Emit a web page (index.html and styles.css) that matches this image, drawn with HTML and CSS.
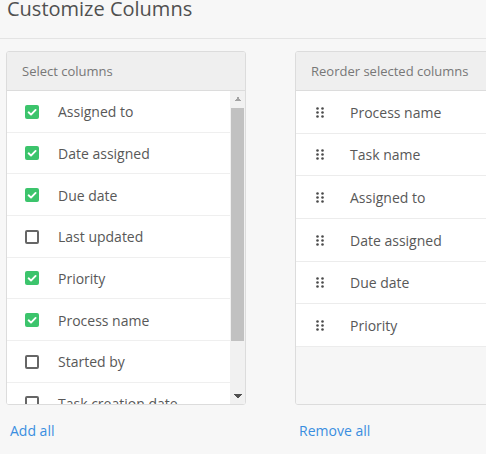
FILE: index.html
```html
<!DOCTYPE html>
<html>
<head>
<meta charset="utf-8">
<link rel="stylesheet" href="styles.css">
</head>
<body>
<div class="page">
  <div class="title-bar"><h1 class="title">Customize Columns</h1></div>
  <div class="columns">
    <div class="col">
      <div class="panel">
        <div class="panel-head">Select columns</div>
        <div class="list list-select">
          <div class="items">
            <div class="row"><span class="cb on"><svg viewBox="0 0 14 14" width="14" height="14"><path d="M3.6 7.3 L6 9.6 L10.6 4.9" fill="none" stroke="#fff" stroke-width="1.9" stroke-linecap="round" stroke-linejoin="round"/></svg></span><span class="label">Assigned to</span></div>
            <div class="row"><span class="cb on"><svg viewBox="0 0 14 14" width="14" height="14"><path d="M3.6 7.3 L6 9.6 L10.6 4.9" fill="none" stroke="#fff" stroke-width="1.9" stroke-linecap="round" stroke-linejoin="round"/></svg></span><span class="label">Date assigned</span></div>
            <div class="row"><span class="cb on"><svg viewBox="0 0 14 14" width="14" height="14"><path d="M3.6 7.3 L6 9.6 L10.6 4.9" fill="none" stroke="#fff" stroke-width="1.9" stroke-linecap="round" stroke-linejoin="round"/></svg></span><span class="label">Due date</span></div>
            <div class="row"><span class="cb off"></span><span class="label">Last updated</span></div>
            <div class="row"><span class="cb on"><svg viewBox="0 0 14 14" width="14" height="14"><path d="M3.6 7.3 L6 9.6 L10.6 4.9" fill="none" stroke="#fff" stroke-width="1.9" stroke-linecap="round" stroke-linejoin="round"/></svg></span><span class="label">Priority</span></div>
            <div class="row"><span class="cb on"><svg viewBox="0 0 14 14" width="14" height="14"><path d="M3.6 7.3 L6 9.6 L10.6 4.9" fill="none" stroke="#fff" stroke-width="1.9" stroke-linecap="round" stroke-linejoin="round"/></svg></span><span class="label">Process name</span></div>
            <div class="row"><span class="cb off"></span><span class="label">Started by</span></div>
            <div class="row"><span class="cb off"></span><span class="label">Task creation date</span></div>
            <div class="row"><span class="cb on"><svg viewBox="0 0 14 14" width="14" height="14"><path d="M3.6 7.3 L6 9.6 L10.6 4.9" fill="none" stroke="#fff" stroke-width="1.9" stroke-linecap="round" stroke-linejoin="round"/></svg></span><span class="label">Task name</span></div>
          </div>
          <div class="scrollbar">
            <div class="sb-btn sb-up"></div>
            <div class="sb-track"><div class="sb-thumb"></div></div>
            <div class="sb-btn sb-down"></div>
          </div>
        </div>
      </div>
      <a class="link" href="#">Add all</a>
    </div>
    <div class="col">
      <div class="panel">
        <div class="panel-head">Reorder selected columns</div>
        <div class="list list-order">
          <div class="row2"><svg class="grip" viewBox="0 0 8 11" width="8" height="11"><circle cx="1.5" cy="1.5" r="1.3"/><circle cx="6.5" cy="1.5" r="1.3"/><circle cx="1.5" cy="5.5" r="1.3"/><circle cx="6.5" cy="5.5" r="1.3"/><circle cx="1.5" cy="9.5" r="1.3"/><circle cx="6.5" cy="9.5" r="1.3"/></svg><span class="label">Process name</span></div>
          <div class="row2"><svg class="grip" viewBox="0 0 8 11" width="8" height="11"><circle cx="1.5" cy="1.5" r="1.3"/><circle cx="6.5" cy="1.5" r="1.3"/><circle cx="1.5" cy="5.5" r="1.3"/><circle cx="6.5" cy="5.5" r="1.3"/><circle cx="1.5" cy="9.5" r="1.3"/><circle cx="6.5" cy="9.5" r="1.3"/></svg><span class="label">Task name</span></div>
          <div class="row2"><svg class="grip" viewBox="0 0 8 11" width="8" height="11"><circle cx="1.5" cy="1.5" r="1.3"/><circle cx="6.5" cy="1.5" r="1.3"/><circle cx="1.5" cy="5.5" r="1.3"/><circle cx="6.5" cy="5.5" r="1.3"/><circle cx="1.5" cy="9.5" r="1.3"/><circle cx="6.5" cy="9.5" r="1.3"/></svg><span class="label">Assigned to</span></div>
          <div class="row2"><svg class="grip" viewBox="0 0 8 11" width="8" height="11"><circle cx="1.5" cy="1.5" r="1.3"/><circle cx="6.5" cy="1.5" r="1.3"/><circle cx="1.5" cy="5.5" r="1.3"/><circle cx="6.5" cy="5.5" r="1.3"/><circle cx="1.5" cy="9.5" r="1.3"/><circle cx="6.5" cy="9.5" r="1.3"/></svg><span class="label">Date assigned</span></div>
          <div class="row2"><svg class="grip" viewBox="0 0 8 11" width="8" height="11"><circle cx="1.5" cy="1.5" r="1.3"/><circle cx="6.5" cy="1.5" r="1.3"/><circle cx="1.5" cy="5.5" r="1.3"/><circle cx="6.5" cy="5.5" r="1.3"/><circle cx="1.5" cy="9.5" r="1.3"/><circle cx="6.5" cy="9.5" r="1.3"/></svg><span class="label">Due date</span></div>
          <div class="row2"><svg class="grip" viewBox="0 0 8 11" width="8" height="11"><circle cx="1.5" cy="1.5" r="1.3"/><circle cx="6.5" cy="1.5" r="1.3"/><circle cx="1.5" cy="5.5" r="1.3"/><circle cx="6.5" cy="5.5" r="1.3"/><circle cx="1.5" cy="9.5" r="1.3"/><circle cx="6.5" cy="9.5" r="1.3"/></svg><span class="label">Priority</span></div>
        </div>
      </div>
      <a class="link" href="#">Remove all</a>
    </div>
  </div>
</div>
</body>
</html>
```

FILE: styles.css
```css
html, body {
  margin: 0;
  padding: 0;
  background: #f7f7f7;
  overflow: hidden;
}
body {
  font-family: "Open Sans", "Noto Sans", sans-serif;
  color: #555;
  width: 486px;
  height: 454px;
}
.page {
  width: 486px;
}
.title-bar {
  border-bottom: 1px solid #e4e4e4;
  padding-left: 7px;
  box-sizing: border-box;
  height: 39px;
}
.title {
  margin: 0;
  font-size: 20px;
  line-height: 18px;
  font-weight: 400;
  color: #505050;
  white-space: nowrap;
}
.columns {
  display: flex;
  gap: 49px;
  padding: 12px 0 0 6px;
}
.col {
  flex: 0 0 240px;
  width: 240px;
  display: flex;
  flex-direction: column;
}
.panel {
  border: 1px solid #dcdcdc;
  border-radius: 3px;
  background: #fff;
  overflow: hidden;
}
.panel-head {
  height: 38px;
  line-height: 38px;
  background: #efefef;
  border-bottom: 1px solid #dcdcdc;
  padding-left: 15px;
  font-size: 13px;
  color: #777;
  white-space: nowrap;
}
.list {
  height: 313px;
}
.list-select {
  display: flex;
  background: #fff;
}
.items {
  flex: 1;
  min-width: 0;
  overflow: hidden;
}
.scrollbar {
  flex: 0 0 15px;
  width: 15px;
  display: flex;
  flex-direction: column;
  background: #f1f1f1;
}
.sb-btn {
  flex: 0 0 16px;
  background-repeat: no-repeat;
  background-position: center;
  background-size: 8px 4px;
}
.sb-up {
  background-image: conic-gradient(from 135deg at 50% 0, #a3a3a3 90deg, transparent 0);
}
.sb-down {
  background-image: conic-gradient(from -45deg at 50% 100%, #505050 90deg, transparent 0);
}
.sb-track {
  flex: 1;
}
.sb-thumb {
  margin: 1px 1px 0 1px;
  height: 233px;
  background: #c1c1c1;
}
.list-order {
  overflow: hidden;
  background: #f6f6f6;
}
.row {
  height: 41.67px;
  box-sizing: border-box;
  border-bottom: 1px solid #efefef;
  display: flex;
  align-items: center;
  padding-left: 18px;
  padding-top: 1px;
  background: #fff;
}
.row2 {
  height: 42.67px;
  box-sizing: border-box;
  border-bottom: 1px solid #ececec;
  display: flex;
  align-items: center;
  padding-left: 20px;
  padding-top: 1px;
  background: #fff;
}
.cb {
  width: 14px;
  height: 14px;
  box-sizing: border-box;
  border-radius: 2px;
  margin-right: 19px;
  flex: 0 0 14px;
  display: flex;
}
.cb.on {
  background: #3cc46c;
}
.cb.off {
  border: 2px solid #666;
}
.grip {
  fill: #4a4a4a;
  margin-right: 26px;
  flex: 0 0 8px;
}
.label {
  font-size: 14px;
  color: #585858;
  white-space: nowrap;
}
.link {
  margin-top: 16px;
  padding-left: 4px;
  font-size: 14px;
  line-height: 20px;
  color: #3a8ee0;
  text-decoration: none;
  align-self: flex-start;
}
```
